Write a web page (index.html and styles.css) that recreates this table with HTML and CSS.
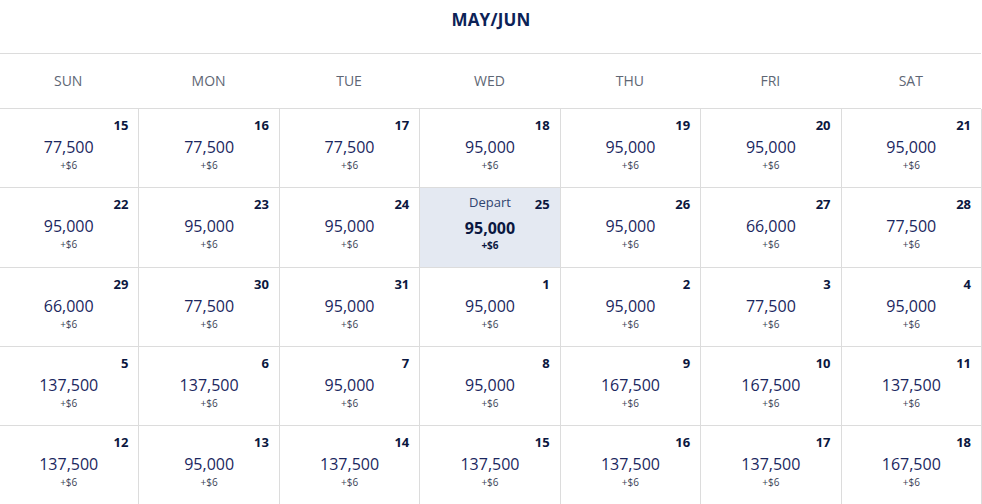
FILE: index.html
```html
<!DOCTYPE html>
<html lang="en">
<head>
<meta charset="utf-8">
<title>Calendar</title>
<link rel="stylesheet" href="styles.css">
</head>
<body>
<div class="calendar">
  <h2 class="title">MAY/JUN</h2>
  <div class="weekdays">
    <div class="wd">SUN</div><div class="wd">MON</div><div class="wd">TUE</div><div class="wd">WED</div><div class="wd">THU</div><div class="wd">FRI</div><div class="wd">SAT</div>
  </div>
  <div class="grid">
    <div class="cell"><div class="top"><span class="day">15</span></div><div class="price">77,500</div><div class="fee">+$6</div></div>
    <div class="cell"><div class="top"><span class="day">16</span></div><div class="price">77,500</div><div class="fee">+$6</div></div>
    <div class="cell"><div class="top"><span class="day">17</span></div><div class="price">77,500</div><div class="fee">+$6</div></div>
    <div class="cell"><div class="top"><span class="day">18</span></div><div class="price">95,000</div><div class="fee">+$6</div></div>
    <div class="cell"><div class="top"><span class="day">19</span></div><div class="price">95,000</div><div class="fee">+$6</div></div>
    <div class="cell"><div class="top"><span class="day">20</span></div><div class="price">95,000</div><div class="fee">+$6</div></div>
    <div class="cell"><div class="top"><span class="day">21</span></div><div class="price">95,000</div><div class="fee">+$6</div></div>

    <div class="cell"><div class="top"><span class="day">22</span></div><div class="price">95,000</div><div class="fee">+$6</div></div>
    <div class="cell"><div class="top"><span class="day">23</span></div><div class="price">95,000</div><div class="fee">+$6</div></div>
    <div class="cell"><div class="top"><span class="day">24</span></div><div class="price">95,000</div><div class="fee">+$6</div></div>
    <div class="cell selected"><div class="top"><span class="label">Depart</span><span class="day">25</span></div><div class="price">95,000</div><div class="fee">+$6</div></div>
    <div class="cell"><div class="top"><span class="day">26</span></div><div class="price">95,000</div><div class="fee">+$6</div></div>
    <div class="cell"><div class="top"><span class="day">27</span></div><div class="price">66,000</div><div class="fee">+$6</div></div>
    <div class="cell"><div class="top"><span class="day">28</span></div><div class="price">77,500</div><div class="fee">+$6</div></div>

    <div class="cell"><div class="top"><span class="day">29</span></div><div class="price">66,000</div><div class="fee">+$6</div></div>
    <div class="cell"><div class="top"><span class="day">30</span></div><div class="price">77,500</div><div class="fee">+$6</div></div>
    <div class="cell"><div class="top"><span class="day">31</span></div><div class="price">95,000</div><div class="fee">+$6</div></div>
    <div class="cell"><div class="top"><span class="day">1</span></div><div class="price">95,000</div><div class="fee">+$6</div></div>
    <div class="cell"><div class="top"><span class="day">2</span></div><div class="price">95,000</div><div class="fee">+$6</div></div>
    <div class="cell"><div class="top"><span class="day">3</span></div><div class="price">77,500</div><div class="fee">+$6</div></div>
    <div class="cell"><div class="top"><span class="day">4</span></div><div class="price">95,000</div><div class="fee">+$6</div></div>

    <div class="cell"><div class="top"><span class="day">5</span></div><div class="price">137,500</div><div class="fee">+$6</div></div>
    <div class="cell"><div class="top"><span class="day">6</span></div><div class="price">137,500</div><div class="fee">+$6</div></div>
    <div class="cell"><div class="top"><span class="day">7</span></div><div class="price">95,000</div><div class="fee">+$6</div></div>
    <div class="cell"><div class="top"><span class="day">8</span></div><div class="price">95,000</div><div class="fee">+$6</div></div>
    <div class="cell"><div class="top"><span class="day">9</span></div><div class="price">167,500</div><div class="fee">+$6</div></div>
    <div class="cell"><div class="top"><span class="day">10</span></div><div class="price">167,500</div><div class="fee">+$6</div></div>
    <div class="cell"><div class="top"><span class="day">11</span></div><div class="price">137,500</div><div class="fee">+$6</div></div>

    <div class="cell"><div class="top"><span class="day">12</span></div><div class="price">137,500</div><div class="fee">+$6</div></div>
    <div class="cell"><div class="top"><span class="day">13</span></div><div class="price">95,000</div><div class="fee">+$6</div></div>
    <div class="cell"><div class="top"><span class="day">14</span></div><div class="price">137,500</div><div class="fee">+$6</div></div>
    <div class="cell"><div class="top"><span class="day">15</span></div><div class="price">137,500</div><div class="fee">+$6</div></div>
    <div class="cell"><div class="top"><span class="day">16</span></div><div class="price">137,500</div><div class="fee">+$6</div></div>
    <div class="cell"><div class="top"><span class="day">17</span></div><div class="price">137,500</div><div class="fee">+$6</div></div>
    <div class="cell"><div class="top"><span class="day">18</span></div><div class="price">167,500</div><div class="fee">+$6</div></div>
  </div>
</div>
</body>
</html>
```
FILE: styles.css
```css
* { box-sizing: border-box; }
html, body { margin: 0; padding: 0; background: #fff; }
body {
  font-family: "Open Sans", "Liberation Sans", sans-serif;
  width: 982px;
  height: 504px;
  overflow: hidden;
}
.calendar { width: 982px; }
.title {
  margin: 0;
  height: 53px;
  padding-top: 8px;
  text-align: center;
  font-size: 17px;
  line-height: 24px;
  font-weight: 700;
  color: #0c2257;
  letter-spacing: 0.2px;
}
.weekdays {
  display: grid;
  grid-template-columns: repeat(7, 1fr);
  border-top: 1px solid #dcdcdc;
  border-bottom: 1px solid #dcdcdc;
  height: 56px;
  padding-bottom: 2px;
  width: 983px;
  margin-left: -2px;
}
.wd {
  display: flex;
  align-items: center;
  justify-content: center;
  font-size: 14px;
  color: #5e6674;
}
.grid {
  display: grid;
  grid-template-columns: repeat(7, 1fr);
  grid-auto-rows: 79.3px;
  width: 983px;
  margin-left: -1px;
}
.cell {
  border-right: 1px solid #dcdcdc;
  border-bottom: 1px solid #dcdcdc;
  padding: 8px 10px 0 10px;
  text-align: center;
}
.top {
  display: grid;
  grid-template-columns: 1fr auto 1fr;
  height: 17px;
  align-items: center;
}
.day {
  grid-column: 3;
  justify-self: end;
  font-size: 13px;
  font-weight: 700;
  color: #0b1740;
  line-height: 17px;
}
.label {
  grid-column: 2;
  font-size: 13px;
  color: #2f4470;
  line-height: 17px;
  margin-top: -4px;
}
.price {
  margin-top: 2px;
  font-size: 16px;
  line-height: 22px;
  color: #1b2760;
}
.fee {
  font-size: 10px;
  line-height: 14px;
  color: #3a3f55;
}
.selected { background: #e4e9f2; }
.selected .price {
  margin-top: 4px;
  font-weight: 700;
  color: #0b1740;
}
.selected .fee {
  margin-top: -1px;
  font-weight: 700;
  color: #0b1740;
}
```
